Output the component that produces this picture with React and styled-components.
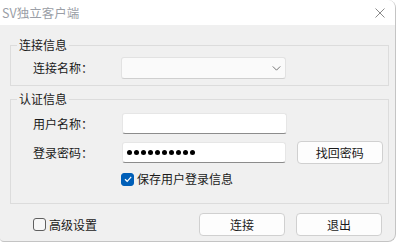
import React from 'react';
import styled, { createGlobalStyle } from 'styled-components';

const GlobalStyle = createGlobalStyle`
  html, body {
    margin: 0;
    padding: 0;
    background: #ffffff;
  }
  body {
    font-family: "Noto Sans CJK SC", "Microsoft YaHei", sans-serif;
    font-size: 12px;
    color: #1a1a1a;
  }
`;

function App() {
  return (
    <>
      <GlobalStyle />
      <Window>
        <TitleBar>
          <Title>SV独立客户端</Title>
          <CloseIcon viewBox="0 0 10 10">
            <path d="M0.5 0.5 L9.5 9.5 M9.5 0.5 L0.5 9.5" />
          </CloseIcon>
        </TitleBar>
        <Body>
          <Group>
            <Legend>连接信息</Legend>
            <Row>
              <Label>连接名称：</Label>
              <Combo>
                <Chevron viewBox="0 0 10 6">
                  <path d="M0.5 0.5 L5 5 L9.5 0.5" />
                </Chevron>
              </Combo>
            </Row>
          </Group>
          <Group $second>
            <Legend>认证信息</Legend>
            <Rows>
              <Row>
                <Label>用户名称：</Label>
                <TextBox />
              </Row>
              <Row>
                <Label>登录密码：</Label>
                <TextBox>
                  {Array.from({ length: 10 }).map((_, i) => (
                    <Dot key={i} />
                  ))}
                </TextBox>
                <Button $wide>找回密码</Button>
              </Row>
              <CheckRow $indent>
                <Check $checked>
                  <svg viewBox="0 0 10 10">
                    <path d="M2 5.2 L4.2 7.3 L8.2 2.8" />
                  </svg>
                </Check>
                <span>保存用户登录信息</span>
              </CheckRow>
            </Rows>
          </Group>
          <Footer>
            <CheckRow>
              <Check />
              <span>高级设置</span>
            </CheckRow>
            <Buttons>
              <Button>连接</Button>
              <Button>退出</Button>
            </Buttons>
          </Footer>
        </Body>
      </Window>
    </>
  );
}

export default App;

const Window = styled.div`
  width: 395px;
  height: 241px;
  display: flex;
  flex-direction: column;
  background: #f0f0f0;
  border-right: 1px solid #c4c4c4;
  border-bottom: 1px solid #c4c4c4;
  border-radius: 0 8px 8px 4px;
  overflow: hidden;
`;

const TitleBar = styled.div`
  height: 25px;
  flex: none;
  display: flex;
  align-items: center;
  justify-content: space-between;
  background: #ffffff;
  padding: 0 10px 0 2px;
`;

const Title = styled.div`
  font-size: 12.5px;
  color: #9a9ea6;
  line-height: 14px;
`;

const CloseIcon = styled.svg`
  width: 10px;
  height: 10px;
  stroke: #8a8a8a;
  stroke-width: 1;
  fill: none;
`;

const Body = styled.div`
  flex: 1;
  padding: 13px 6px 0 10px;
  display: flex;
  flex-direction: column;
`;

const Group = styled.fieldset`
  margin: ${p => (p.$second ? '6px 0 0' : '0')};
  padding: ${p => (p.$second ? '7px 5px 16px 22px' : '5px 5px 6px 22px')};
  border: 1px solid #dcdcdc;
  min-width: 0;
`;

const Legend = styled.legend`
  padding: 0 2px;
  margin-left: -16px;
  font-size: 12px;
  line-height: 14px;
  color: #1a1a1a;
`;

const Rows = styled.div`
  display: flex;
  flex-direction: column;
  gap: 7px;
`;

const Row = styled.div`
  display: flex;
  align-items: center;
`;

const Label = styled.div`
  width: 88px;
  flex: none;
  font-size: 12px;
  line-height: 14px;
`;

const Combo = styled.div`
  width: 165px;
  height: 22px;
  box-sizing: border-box;
  background: #fafafa;
  border: 1px solid #e2e2e2;
  border-bottom-color: #cfcfcf;
  border-radius: 3px;
  display: flex;
  align-items: center;
  justify-content: flex-end;
  padding-right: 4px;
`;

const Chevron = styled.svg`
  width: 9px;
  height: 5px;
  stroke: #5a5a5a;
  stroke-width: 1;
  fill: none;
`;

const TextBox = styled.div`
  width: 165px;
  height: 21px;
  box-sizing: border-box;
  margin-left: 1px;
  background: #ffffff;
  border: 1px solid #e6e6e6;
  border-bottom-color: #8c8c8c;
  border-radius: 3px;
  display: flex;
  align-items: center;
  gap: 2px;
  padding-left: 4px;
`;

const Dot = styled.span`
  width: 5px;
  height: 5px;
  border-radius: 50%;
  background: #000000;
`;

const Button = styled.button`
  width: ${p => (p.$wide ? '87px' : '86px')};
  height: 23px;
  margin-left: ${p => (p.$wide ? '11px' : '0')};
  box-sizing: border-box;
  background: #fdfdfd;
  border: 1px solid #d0d0d0;
  border-radius: 4px;
  font-family: "Noto Sans CJK SC", sans-serif;
  font-size: 12px;
  color: #1a1a1a;
  padding: 0;
`;

const CheckRow = styled.div`
  display: flex;
  align-items: center;
  gap: 3px;
  height: 16px;
  margin-left: ${p => (p.$indent ? '88px' : '0')};
  font-size: 12px;
  line-height: 14px;
`;

const Check = styled.div`
  width: 13px;
  height: 13px;
  box-sizing: border-box;
  border-radius: 3px;
  background: ${p => (p.$checked ? '#005fb8' : '#f7f7f7')};
  border: 1px solid ${p => (p.$checked ? '#005fb8' : '#5f5f5f')};
  display: flex;
  align-items: center;
  justify-content: center;
  & svg {
    width: 10px;
    height: 10px;
    stroke: #ffffff;
    stroke-width: 1.2;
    fill: none;
  }
`;

const Footer = styled.div`
  display: flex;
  align-items: center;
  justify-content: space-between;
  margin-top: 9px;
  padding: 0 7px 0 23px;
`;

const Buttons = styled.div`
  display: flex;
  gap: 11px;
`;
